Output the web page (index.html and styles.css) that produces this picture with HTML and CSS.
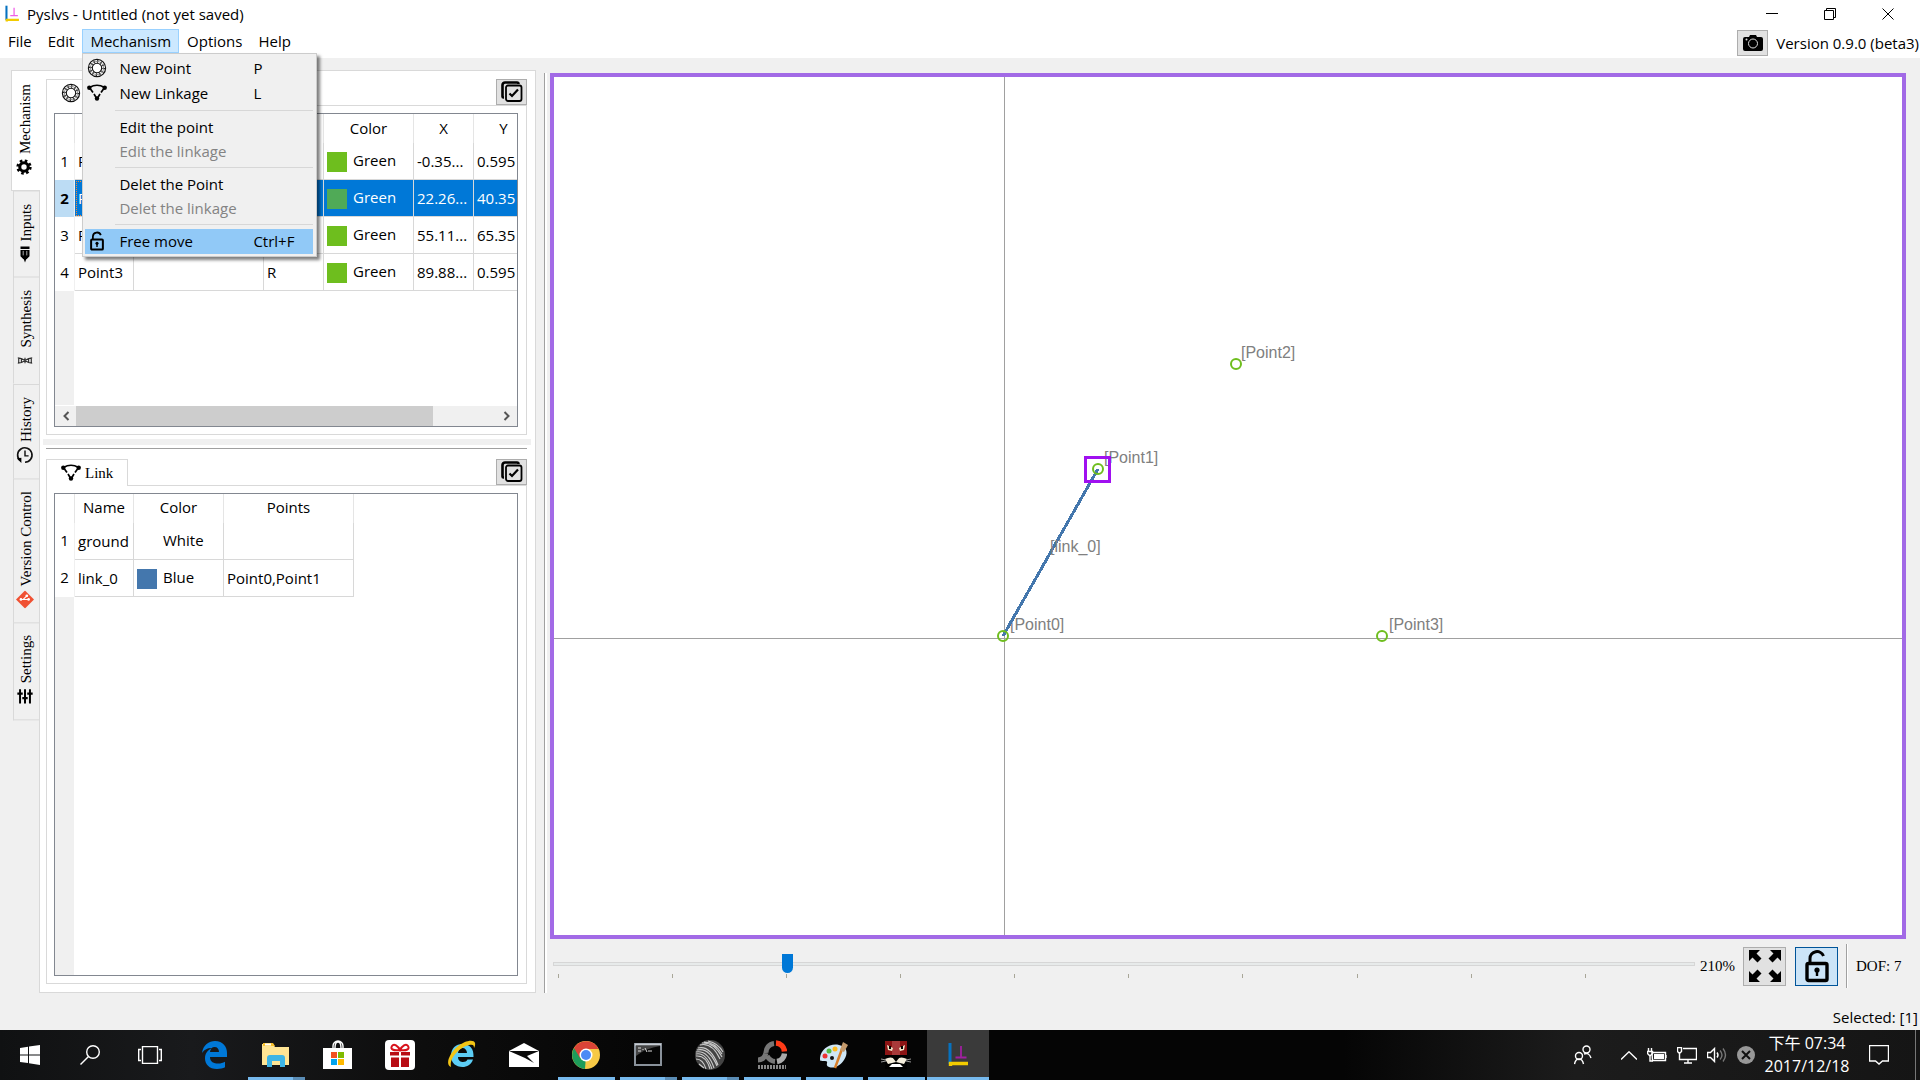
FILE: index.html
```html
<!DOCTYPE html>
<html lang="en">
<head>
<meta charset="utf-8">
<title>Pyslvs - Untitled (not yet saved)</title>
<link rel="stylesheet" href="styles.css">
</head>
<body>
<svg class="defs" aria-hidden="true">
  <symbol id="i-bearing" viewBox="0 0 20 20">
    <circle cx="10" cy="10" r="8.6" fill="#fff" stroke="#111" stroke-width="1.2"/>
    <circle cx="10" cy="10" r="6.6" fill="none" stroke="#222" stroke-width="2.8" stroke-dasharray="1.1 2.35"/>
    <circle cx="10" cy="10" r="6.6" fill="none" stroke="#777" stroke-width=".8"/>
    <circle cx="10" cy="10" r="4.7" fill="#fff" stroke="#111" stroke-width="1.1"/>
  </symbol>
  <symbol id="i-link" viewBox="0 0 20 20">
    <path d="M2.500 4.500Q10 0 17.500 4.500M3.500 6l2.500 3.500M7 11l3 5M16.500 6L14 9.500M13 11l-3 5" fill="none" stroke="#000" stroke-width="1.700"/>
    <circle cx="2.300" cy="4.700" r="2.200"/><circle cx="17.700" cy="4.700" r="2.200"/><circle cx="10" cy="15.500" r="2.200"/>
  </symbol>
  <symbol id="i-lock" viewBox="0 0 24 34">
    <path d="M5 14V9.500a7 7 0 0 1 13.500-2.500" fill="none" stroke="#000" stroke-width="3"/>
    <rect x="2" y="14.500" width="20" height="17" rx="1.500" fill="none" stroke="#000" stroke-width="3.400"/>
    <circle cx="12" cy="21" r="2.600"/><path d="M10.800 21h2.400v6h-2.400z"/>
  </symbol>
  <symbol id="i-multi" viewBox="0 0 22 22">
    <path d="M3 16.500H2.500a1 1 0 0 1-1-1V4a2.500 2.500 0 0 1 2.500-2.500h12a1.500 1.500 0 0 1 1.500 1.500" fill="none" stroke="#000" stroke-width="2.600"/>
    <rect x="5" y="4.500" width="15.500" height="15.500" rx="2" fill="#e1e1e1" stroke="#000" stroke-width="1.800"/>
    <path d="M8.500 12.500l2.500 2.500 6-6.500" fill="none" stroke="#000" stroke-width="2.200"/>
  </symbol>
  <symbol id="i-pyslvs" viewBox="0 0 22 26">
    <path d="M3 1v21" stroke="#0672c0" stroke-width="3" fill="none"/><path d="M3.500 24V21.500H21" stroke="#f2cb00" stroke-width="3.400" fill="none"/>
    <path d="M14 4v11M8.500 15.500h11" stroke="var(--mark)" stroke-width="1.800" fill="none"/>
  </symbol>
</svg>

<header class="titlebar">
  <svg class="app-icon"><use href="#i-pyslvs"/></svg>
  <h1 class="window-title">Pyslvs - Untitled (not yet saved)</h1>
  <div class="window-buttons">
    <button aria-label="Minimize"><svg width="12" height="12"><path d="M0 5.500h12" class="thin"/></svg></button>
    <button aria-label="Restore"><svg width="12" height="12"><path d="M.5 2.500h9v9h-9zM2.500 2V.5h9v9H10" class="thin"/></svg></button>
    <button aria-label="Close"><svg width="12" height="12"><path d="M.5.5l11 11M11.500.5l-11 11" class="thin"/></svg></button>
  </div>
</header>

<nav class="menubar">
  <button class="menu-title">File</button>
  <button class="menu-title">Edit</button>
  <div class="menu-open">
    <button class="menu-title active" aria-expanded="true">Mechanism</button>
    <div class="dropdown" role="menu">
      <button class="item tall" role="menuitem"><svg class="item-icon"><use href="#i-bearing"/></svg><span>New Point</span><kbd>P</kbd></button>
      <button class="item tall" role="menuitem"><svg class="item-icon"><use href="#i-link"/></svg><span>New Linkage</span><kbd>L</kbd></button>
      <hr>
      <button class="item" role="menuitem"><i></i><span>Edit the point</span></button>
      <button class="item" role="menuitem" disabled><i></i><span>Edit the linkage</span></button>
      <hr>
      <button class="item" role="menuitem"><i></i><span>Delet the Point</span></button>
      <button class="item" role="menuitem" disabled><i></i><span>Delet the linkage</span></button>
      <hr>
      <button class="item tall hover" role="menuitem"><svg class="item-icon"><use href="#i-lock"/></svg><span>Free move</span><kbd>Ctrl+F</kbd></button>
    </div>
  </div>
  <button class="menu-title">Options</button>
  <button class="menu-title">Help</button>
  <div class="menu-corner">
    <button class="tool" aria-label="Screenshot"><svg width="20" height="16" viewBox="0 0 20 16"><path d="M2 2h4l1-2h6l1 2h4a2 2 0 0 1 2 2v10a2 2 0 0 1-2 2H2a2 2 0 0 1-2-2V4a2 2 0 0 1 2-2z"/><circle cx="10" cy="8.500" r="4.500" fill="none" stroke="#ddd"/><circle cx="3.500" cy="4.500" r="1" fill="#ddd"/></svg></button>
    <span>Version 0.9.0 (beta3)</span>
  </div>
</nav>

<main class="workspace">
  <div class="side-tabs" role="tablist">
    <button class="side-tab selected" role="tab"><svg viewBox="0 0 20 20"><circle cx="10" cy="10" r="4.700" fill="none" stroke="#000" stroke-width="3.400"/><circle cx="10" cy="10" r="7" fill="none" stroke="#000" stroke-width="3" stroke-dasharray="2.800 2.700"/></svg>Mechanism</button>
    <button class="side-tab" role="tab"><svg viewBox="0 0 20 20"><path d="M5 1h10v3H5zM5 5h10v7l-3 3H8l-3-3z"/><path d="M8 6v5M12 6v5" stroke="#bbb"/><path d="M8.500 15h3L10 19z"/></svg>Inputs</button>
    <button class="side-tab" role="tab"><svg viewBox="0 0 20 20"><path d="M2 7q4 0 8 3t8 3M2 13q4 0 8-3t8-3M3 7v6M6 8v4M14 8v4M17 7v6M10 7v6" fill="none" stroke="#333" stroke-width="1.300"/></svg>Synthesis</button>
    <button class="side-tab" role="tab"><svg viewBox="0 0 20 20"><path d="M4.500 16A8 8 0 1 1 10 18" fill="none" stroke="#111" stroke-width="1.800"/><path d="M1 14l5-1v6z"/><path d="M10 5v6h4" fill="none" stroke="#111" stroke-width="1.600"/></svg>History</button>
    <button class="side-tab" role="tab"><svg viewBox="0 0 20 20"><path d="M10 0l10 10-10 10L0 10z" fill="#f05133"/><path d="M5 10h9M8 10l4-4" stroke="#fff" stroke-width="1.200"/><circle cx="5.500" cy="10" r="1.500" fill="#fff"/><circle cx="14" cy="10" r="1.500" fill="#fff"/><circle cx="12" cy="6" r="1.500" fill="#fff"/></svg>Version Control</button>
    <button class="side-tab" role="tab"><svg viewBox="0 0 20 20"><path d="M4.500 2v16M10 2v16M15.500 2v16" stroke="#000" stroke-width="2.200"/><path d="M1.500 7h6M7 12h6M12.500 7h6" stroke="#000" stroke-width="2.600"/></svg>Settings</button>
  </div>

  <section class="panel">
    <div class="group points">
      <div class="tab-row">
        <button class="tab" aria-label="Point"><svg><use href="#i-bearing"/></svg></button>
        <button class="tool" aria-label="Select all points"><svg width="22" height="22"><use href="#i-multi"/></svg></button>
      </div>
      <div class="pane">
        <div class="frame">
          <table class="grid grid-points">
            <colgroup><col class="c-num"><col class="c-name"><col class="c-wide"><col class="c-mid"><col class="c-color"><col class="c-mid"><col class="c-mid"></colgroup>
            <thead><tr><th></th><th></th><th></th><th></th><th>Color</th><th>X</th><th>Y</th></tr></thead>
            <tbody>
              <tr><th>1</th><td>Point0</td><td></td><td></td><td><i class="swatch green"></i>Green</td><td>-0.35...</td><td>0.595</td></tr>
              <tr class="selected"><th>2</th><td class="focus">Point1</td><td></td><td></td><td><i class="swatch green"></i>Green</td><td>22.26...</td><td>40.35</td></tr>
              <tr><th>3</th><td>Point2</td><td></td><td></td><td><i class="swatch green"></i>Green</td><td>55.11...</td><td>65.35</td></tr>
              <tr><th>4</th><td>Point3</td><td></td><td>R</td><td><i class="swatch green"></i>Green</td><td>89.88...</td><td>0.595</td></tr>
            </tbody>
          </table>
          <div class="row-rest"></div>
          <div class="scrollbar">
            <button aria-label="Scroll left"><svg width="8" height="10"><path d="M6.500 1l-4 4 4 4" class="arrow"/></svg></button>
            <div class="track"><div class="thumb"></div></div>
            <button aria-label="Scroll right"><svg width="8" height="10"><path d="M1.500 1l4 4-4 4" class="arrow"/></svg></button>
          </div>
        </div>
      </div>
    </div>
    <div class="h-split"></div>
    <div class="h-line"></div>
    <div class="group links">
      <div class="tab-row">
        <button class="tab"><svg><use href="#i-link"/></svg>Link</button>
        <button class="tool" aria-label="Select all links"><svg width="22" height="22"><use href="#i-multi"/></svg></button>
      </div>
      <div class="pane">
        <div class="frame">
          <table class="grid grid-links">
            <colgroup><col class="c-num"><col class="c-name"><col class="c-color"><col class="c-wide"></colgroup>
            <thead><tr><th></th><th>Name</th><th>Color</th><th>Points</th></tr></thead>
            <tbody>
              <tr><th>1</th><td>ground</td><td><i class="swatch white"></i>White</td><td></td></tr>
              <tr><th>2</th><td>link_0</td><td><i class="swatch blue"></i>Blue</td><td>Point0,Point1</td></tr>
            </tbody>
          </table>
          <div class="row-rest"></div>
        </div>
      </div>
    </div>
  </section>

  <div class="v-split"></div>

  <section class="view">
    <div class="canvas">
      <svg class="drawing" shape-rendering="crispEdges">
        <path d="M0 561.500h9999M450.500 0v9999" stroke="#a0a0a0"/>
        <g class="labels" shape-rendering="auto">
          <text x="456" y="553">[Point0]</text><text x="550" y="386">[Point1]</text><text x="687" y="281">[Point2]</text><text x="835" y="553">[Point3]</text>
        </g>
        <path d="M449 559L544 392" stroke="#4477ad" stroke-width="3"/>
        <text class="labels" x="496" y="475">[link_0]</text>
        <g fill="none" stroke="#6ebe1e" stroke-width="2" shape-rendering="auto">
          <circle cx="449" cy="559" r="5"/><circle cx="544" cy="392" r="5"/><circle cx="682" cy="287" r="5"/><circle cx="828" cy="559" r="5"/>
        </g>
        <rect x="531.500" y="380.500" width="24" height="24" fill="none" stroke="#a010f0" stroke-width="3"/>
      </svg>
    </div>
    <div class="controls">
      <div class="zoom">
        <input type="range" min="10" max="1000" value="210" aria-label="Zoom">
        <div class="ticks"><i></i><i></i><i></i><i></i><i></i><i></i><i></i><i></i><i></i><i></i></div>
      </div>
      <output class="percent">210%</output>
      <button class="big" aria-label="Zoom to fit"><svg width="34" height="34" viewBox="0 0 34 34"><path d="M1 1h11l-3.500 3.500 5 5-4 4-5-5L1 12zM33 1v11l-3.500-3.500-5 5-4-4 5-5L22 1zM1 33V22l3.500 3.500 5-5 4 4-5 5L12 33zM33 33H22l3.500-3.500-5-5 4-4 5 5L33 22z"/></svg></button>
      <button class="big on" aria-label="Free move" aria-pressed="true"><svg width="24" height="34"><use href="#i-lock"/></svg></button>
      <div class="sep"></div>
      <span class="dof">DOF: 7</span>
    </div>
  </section>
</main>
<div class="statusbar">Selected: [1]</div>

<footer class="taskbar">
  <button class="sys" aria-label="Start"><svg width="20" height="20" fill="#fff"><path d="M0 3l8-1.200V9.400H0zM9 1.600L20 0v9.400H9zM0 10.400h8V18l-8-1zM9 10.400h11V20L9 18.300z"/></svg></button>
  <button class="sys" aria-label="Search"><svg width="20" height="20"><circle cx="13" cy="7" r="6.300" class="line"/><path d="M8.500 11.500L.5 19.500" class="line"/></svg></button>
  <button class="sys" aria-label="Task View"><svg width="24" height="18"><path d="M4.500.5h15v17h-15zM3 3.500H.7v11H3M21 3.500h2.300v11H21" class="line"/></svg></button>
  <button class="app" aria-label="Edge"><svg width="26" height="28" viewBox="0 0 26 28"><path d="M1 12C2 4 8 0 14 0c8 0 12 6 12 12v4H9c0 5 4 6.500 8 6.500 3 0 5-.7 7-1.800v5.600C22 27.500 19 28 16 28 8 28 4 23 4 17.500 4 12 7 9 11 7 6 7 3 9 1 12zm8-1h9c0-3-1.600-5-4.400-5S9.400 8 9 11z" fill="#0078d7"/></svg></button>
  <button class="app running stacked" aria-label="File Explorer"><svg width="28" height="24"><path d="M0 1h11l2 3h14v18H0z" fill="#ffe594"/><path d="M1 0h10l2 3H1z" fill="#f8c12c"/><path d="M3 1.500h6" stroke="#fff" stroke-width="2"/><path d="M5 24V15q0-3 3-3h12q3 0 3 3v9h-5v-6h-8v6z" fill="#3eb5e5"/></svg></button>
  <button class="app" aria-label="Store"><svg width="30" height="30"><path d="M10 9V6a5 5 0 0 1 10 0v3M12 8q0-6 3-6t3 6" class="line"/><path d="M0 8h29v21H0z" fill="#fff"/><path d="M8 12h6v6H8z" fill="#f25022"/><path d="M15 12h6v6h-6z" fill="#7fba00"/><path d="M8 19h6v6H8z" fill="#00a4ef"/><path d="M15 19h6v6h-6z" fill="#ffb900"/></svg></button>
  <button class="app" aria-label="Gifts"><svg width="30" height="30"><rect width="30" height="30" rx="4" fill="#fff"/><path d="M5 12h20v4H5zM6 17h18v10H6z" fill="#b80c14"/><path d="M15 12v16M5 16.500h20" stroke="#fff" stroke-width="2"/><path d="M15 10C8 11 5 9 7 6s6 0 8 4c2-4 6-7 8-4s-1 5-8 4z" fill="none" stroke="#d8121b" stroke-width="2"/></svg></button>
  <button class="app" aria-label="Internet Explorer"><svg width="30" height="30"><path d="M4 16C4 8 9 4 15.500 4 23 4 27 9 26.500 17H11c0 4 3 5 5 5s3.500-.7 4.500-2.500h5.500C24 25 20 27 15.500 27 9 27 4 23 4 16zm7-3h9c0-3-2-5-4.500-5S11.400 10 11 13z" fill="#5ccdf5"/><path d="M4 27C-2 25 2 14 10 7S27-1 28 3c.5 2-.5 4-1 5 0-3-1-4-5-3C13 7 2 18 4 27z" fill="#f3c515"/></svg></button>
  <button class="app" aria-label="Mail"><svg width="30" height="24"><path d="M0 8L15 0l15 8v16H0z" fill="#fff"/><path d="M0 8h30L18 13l7 7-9-5z" fill="#0a0a0a"/></svg></button>
  <button class="app running" aria-label="Chrome"><svg width="28" height="28"><circle cx="14" cy="14" r="14" fill="#f7c945"/><path d="M14 14L2 7a14 14 0 0 0 11 21z" fill="#1d9c5a"/><path d="M2 7a14 14 0 0 1 24.500 1H14L8 17z" fill="#db4437"/><circle cx="14" cy="14" r="6.500" fill="#fff"/><circle cx="14" cy="14" r="5" fill="#4c8bf5"/></svg></button>
  <button class="app running stacked" aria-label="Command Prompt"><svg width="28" height="24"><rect x="1" y="1" width="26" height="21" fill="#050505" stroke="#8a929b" stroke-width="2"/><path d="M1 1.500h26" stroke="#c7ccd2" stroke-width="2"/><path d="M2 3h24q-14 2-24 10z" fill="#444"/><path d="M4 5h3M4 8h3M9 6v1M11 5l2 4M14 8h4" stroke="#ddd"/></svg></button>
  <button class="app running stacked" aria-label="Geometry"><svg width="30" height="30"><circle cx="15" cy="15" r="15" fill="#444"/><g fill="none" stroke="#ccc" stroke-width="1.100"><path d="M5 5q12-3 20 14M3 8q12-3 20 17M1 12q12-2 18 16M1 16q10-1 14 13M9 2q11 0 18 12M7 3q12-1 20 14M2 10q12-3 20 16M1 14q10-2 16 15M1 19q7 0 10 10M13 1q10 2 15 11M4 24l5 4"/></g></svg></button>
  <button class="app running" aria-label="PhotoScape"><svg width="30" height="30" fill="none"><path d="M1 20q6 0 8-7M9 13A9 9 0 0 1 17 3.500" stroke="#777" stroke-width="5"/><path d="M10 16q3 5 8 5.500" stroke="#777" stroke-width="5"/><path d="M19 3a9 9 0 0 1 8.500 8.500" stroke="#ff3b17" stroke-width="5.500"/><path d="M27.500 13.500a9 9 0 0 1-7.500 8" stroke="#aaa" stroke-width="5.500"/><path d="M1 27h28" stroke="#888" stroke-width="4" stroke-dasharray="2 1"/></svg></button>
  <button class="app running" aria-label="Paint"><svg width="30" height="28"><path d="M1 17C2 8 11 2 20 4s9 9 5 15-10 9-15 7 1-6-4-6-5 0-5-3z" fill="#cfe6f5"/><circle cx="6" cy="15" r="2.500" fill="#e33"/><circle cx="10" cy="10" r="2.500" fill="#5b4"/><circle cx="16" cy="8" r="2.500" fill="#fb2"/><circle cx="13" cy="17" r="2" fill="#111"/><path d="M16 27l7-19" stroke="#d77f2b" stroke-width="2.500"/><path d="M21 9l3-8 5 3-4 7z" fill="#c49a6c"/></svg></button>
  <button class="app running" aria-label="Tiger"><svg width="30" height="28"><path d="M4 0h22v28H4z" fill="#8c1414"/><path d="M11 0h8v16h-8z" fill="#a83a3a"/><path d="M6 4l6 3-1 3-4-1zM24 4l-6 3 1 3 4-1z" fill="#efe6c8"/><path d="M8 5h2v3H8zM20 5h2v3h-2zM4 14h22v14H4z" fill="#000"/><path d="M4 18q6-3 10 0h2q4-3 10 0l-3 5-8-2-8 2z" fill="#f5eedc"/><path d="M0 18l5 1M0 21l5-1M30 18l-5 1M30 21l-5-1" stroke="#999"/><path d="M8 26h14l-3-3h-8z" fill="#fff"/><path d="M12 17h6l-3 4z" fill="#000"/></svg></button>
  <button class="app running current" aria-label="Pyslvs"><svg width="22" height="26"><use href="#i-pyslvs"/></svg></button>
  <div class="tray">
    <svg width="18" height="20"><circle cx="12.500" cy="4.500" r="3.500" class="line"/><circle cx="5" cy="11" r="3.500" class="line"/><path d="M.5 19q1-5 4.500-5t4.500 5M10 9q5-2 7 4" class="line"/></svg>
    <svg width="16" height="9"><path d="M0 8.500L8 .8l8 7.700" class="line"/></svg>
    <svg width="20" height="14"><path d="M5 4.500h13.500v8h-13zM19 7v3" class="line"/><path d="M7 6h10v5H7z" fill="#fff"/><path d="M1.500 0v3M4.500 0v3M.5 3.500h5v2l-2 2h-1l-2-2zM3 7v6h3" class="line"/></svg>
    <svg width="20" height="17"><path d="M6 1.500h13.500v11H2.500V7M11 13v3M7 16h8M.5.5h4v4l-2 2-2-2z" class="line"/></svg>
    <svg width="20" height="16"><path d="M.5 5.500h3l4-4v13l-4-4h-3z" class="line"/><path d="M10 5.500q2 2.500 0 5" class="line"/><path d="M13 3.500q4 4.500 0 9M16 1.500q5 6.500 0 13" class="line dim"/></svg>
    <svg width="18" height="18"><circle cx="9" cy="9" r="9" fill="#989898"/><path d="M5 5l8 8M13 5l-8 8" stroke="#111" stroke-width="2"/></svg>
    <time class="clock" datetime="2017-12-18T19:34"><span>下午 07:34</span><span>2017/12/18</span></time>
    <svg width="20" height="20"><path d="M.5.5h19v15.500h-6L10 19l-3.500-3H.5z" class="line"/></svg>
    <div class="show-desktop"></div>
  </div>
</footer>
</body>
</html>
```
FILE: styles.css
```css
* { box-sizing: border-box; }
html, body { margin: 0; }
body {
  --mark: #f060e8;
  display: flex;
  flex-direction: column;
  height: 100vh;
  background: #f0f0f0;
  color: #000;
  font: 15px/20px "Open Sans", "Noto Sans", "Noto Sans CJK TC", sans-serif;
  overflow: hidden;
}
button { margin: 0; padding: 0; border: 0; background: none; color: inherit; font: inherit; }
svg { display: block; flex: none; }
.defs { position: absolute; width: 0; height: 0; }
.thin { fill: none; stroke: #000; }
.line { fill: none; stroke: #fff; stroke-width: 1.4; }
.dim { stroke: #777; }
.arrow { fill: none; stroke: #555; stroke-width: 2; }

.titlebar { display: flex; align-items: center; height: 29px; padding: 0 3px 1px 4px; background: #fff; }
.app-icon { width: 16px; height: 18px; }
.window-title { flex: 1; margin: 0 0 0 7px; font-size: 15px; font-weight: 400; }
.window-buttons { display: flex; }
.window-buttons button { display: flex; justify-content: center; align-items: center; width: 58px; height: 28px; }

.menubar { display: flex; height: 29px; background: #fff; }
.menu-title { height: 24px; padding: 0 7px; border: 1px solid transparent; white-space: nowrap; }
.menu-title.active { background: #cce8ff; border-color: #99d1ff; }
.menu-open { position: relative; }
.dropdown {
  position: absolute;
  z-index: 5;
  top: 24px;
  left: 0;
  width: 235px;
  padding: 2px;
  background: #f0f0f0;
  border: 1px solid #ccc;
  box-shadow: 3px 3px 3px rgba(0, 0, 0, .5);
}
.dropdown hr { height: 1px; margin: 4px 1px 4px 30px; border: 0; background: #d7d7d7; }
.item { display: grid; grid-template-columns: 24px 1fr 60px; column-gap: 10px; align-items: center; width: 228px; height: 24px; text-align: left; }
.item span { white-space: nowrap; }
.item.tall { height: 25px; padding-bottom: 2px; }
.item.hover { background: #91c9f7; }
.item:disabled { color: #838383; }
.item-icon { width: 20px; height: 20px; justify-self: center; }
.item kbd { font: inherit; }
.menu-corner { display: flex; align-items: center; gap: 8px; height: 28px; margin-left: auto; padding-right: 1px; white-space: nowrap; }
.tool { display: flex; align-items: center; justify-content: center; width: 31px; height: 26px; background: #e1e1e1; border: 1px solid #adadad; }

.workspace { flex: 1; min-height: 0; display: flex; padding: 12px 14px 13px 11px; }
.side-tabs { display: flex; flex-direction: column; align-items: flex-end; width: 28px; font: 15px/18px "Liberation Serif", serif; }
.side-tab {
  display: flex;
  align-items: center;
  gap: 4px;
  width: 26px;
  padding: 14px 0 12px 2px;
  writing-mode: vertical-rl;
  transform: rotate(180deg);
  border: 1px solid #d9d9d9;
  border-left: 0;
  border-top: 0;
}
.side-tab svg { width: 18px; height: 18px; transform: rotate(180deg); }
.side-tab:last-child { border-top: 1px solid #d9d9d9; }
.side-tab.selected { position: relative; z-index: 1; width: 29px; margin-right: -1px; padding: 14px 0 13px 3px; background: #fff; border-top: 1px solid #d9d9d9; }

.panel { flex: 0 0 497px; min-width: 0; display: flex; flex-direction: column; padding: 8px 8px 8px 6px; background: #fff; border: 1px solid #d9d9d9; }
.group { display: flex; flex-direction: column; min-height: 0; }
.points { flex: 356 1 0; }
.links { flex: 526 1 0; }
.tab-row { display: flex; justify-content: space-between; align-items: flex-start; height: 26px; }
.tab {
  position: relative;
  display: flex;
  align-items: center;
  gap: 4px;
  height: 27px;
  padding: 0 14px;
  background: #fff;
  border: 1px solid #d9d9d9;
  border-bottom: 0;
  font: 15px/20px "Liberation Serif", serif;
}
.tab svg { width: 20px; height: 20px; }
.points .tab { width: 88px; }
.pane { flex: 1; min-height: 0; min-width: 0; display: flex; padding: 7px 8px 7px 7px; border: 1px solid #d9d9d9; }
.frame { flex: 1; min-width: 0; display: flex; flex-direction: column; border: 1px solid #828790; overflow: hidden; }
.h-split { height: 6px; margin: 4px -4px 3px -3px; background: #f0f0f0; }
.h-line { height: 1px; margin-bottom: 10px; background: #a0a0a0; }

.grid { flex: none; table-layout: fixed; border-spacing: 0; }
.grid-points { width: 479px; }
.grid-links { width: 299px; }
.c-num { width: 20px; }
.c-name { width: 59px; }
.c-mid { width: 60px; }
.c-color { width: 90px; }
.c-wide { width: 130px; }
.grid th, .grid td { padding: 0; font-weight: 400; white-space: nowrap; overflow: hidden; border-right: 1px solid #d8d8d8; }
.grid thead th { height: 29px; padding-bottom: 2px; border-color: #e5e5e5; }
.grid tbody th { padding-bottom: 2px; border-color: #f0f0f0; }
.grid td { height: 37px; padding-left: 3px; border-bottom: 1px solid #d8d8d8; }
.grid .selected td { background: #0078d7; color: #fff; }
.grid .selected th { background: #bcdcf4; font-weight: 700; }
.grid .focus { outline: 1px dotted #ff8728; outline-offset: -2px; }
.swatch { display: inline-block; width: 20px; height: 20px; margin-right: 6px; vertical-align: middle; }
.green { background: #6ebe1e; }
.selected .green { background: #50aa57; }
.blue { background: #4477ad; }
.white { background: #fff; }
.row-rest { flex: 1; width: 19px; background: #f0f0f0; }
.scrollbar { display: flex; height: 21px; border-top: 1px solid #fff; background: #f0f0f0; }
.scrollbar button { display: flex; align-items: center; justify-content: center; width: 21px; }
.track { flex: 1; display: flex; }
.thumb { width: 85%; background: #cdcdcd; }

.v-split { width: 3px; margin: 3px 3px 0 8px; background: #fff; border-left: 1px solid #a0a0a0; }
.view { flex: 1; min-width: 0; display: flex; flex-direction: column; padding: 3px 0 5px; }
.canvas { flex: 1; min-height: 0; background: #fff; border: 4px solid #a26ae6; }
.drawing { width: 100%; height: 100%; }
.labels { fill: #808080; font: 16px "Liberation Sans", sans-serif; }
.controls { display: flex; align-items: center; height: 44px; margin-top: 5px; padding: 0 3px; font: 15px/20px "Liberation Serif", serif; }
.zoom { flex: 1; }
.zoom input { display: block; width: 100%; height: 19px; margin: 0; appearance: none; background: none; }
.zoom input::-webkit-slider-runnable-track { height: 4px; background: #e7eaea; border: 1px solid #d6d6d6; }
.zoom input::-webkit-slider-thumb { appearance: none; width: 11px; height: 19px; margin-top: -9px; background: #0078d7; border-radius: 0 0 6px 6px; }
.ticks { display: flex; justify-content: space-between; width: 90%; margin: 1px 0 0 5px; }
.ticks i { width: 1px; height: 4px; background: #a8a698; }
.percent { margin: 0 8px 0 5px; }
.big { display: flex; align-items: center; justify-content: center; width: 43px; height: 39px; margin-right: 9px; background: #e1e1e1; border: 1px solid #adadad; }
.big.on { background: #cce4f7; border-color: #005499; margin-right: 8px; }
.sep { width: 2px; height: 44px; margin-right: 8px; background: #fff; border-left: 1px solid #a0a0a0; }
.dof { min-width: 47px; }

.statusbar { height: 24px; padding-right: 2px; line-height: 22px; text-align: right; }

.taskbar {
  --mark: #a020a0;
  display: flex;
  height: 50px;
  background: linear-gradient(90deg, #101112, #191a1c 10%, #0d0d0d 22%, #050505 35%, #050505 70%, #1c1c1c 82%, #151515);
  color: #fff;
}
.taskbar button { display: flex; align-items: center; justify-content: center; }
.sys { width: 60px; }
.app { width: 62px; border-bottom: 3px solid transparent; padding-top: 3px; }
.sys:nth-child(3) { margin-right: 3px; }
.taskbar .running { border-image: linear-gradient(90deg, transparent 6px, #76b9ed 6px, #76b9ed 57px, transparent 57px) 3; border-width: 0 0 3px; border-style: solid; }
.taskbar .stacked { border-image-source: linear-gradient(90deg, transparent 6px, #76b9ed 6px, #76b9ed 46px, #5a8cb5 46px, #5a8cb5 57px, transparent 57px); }
.taskbar .current { background: #3a3a3a; border-image-source: linear-gradient(90deg, #76b9ed, #76b9ed); }
.tray { display: flex; align-items: center; gap: 10px; margin-left: auto; }
.tray svg:first-child { margin-right: 19px; }
.clock { display: flex; flex-direction: column; align-items: center; width: 84px; margin-right: 10px; font-size: 16px; line-height: 23px; white-space: nowrap; }
.show-desktop { width: 5px; height: 50px; margin-left: 16px; border-left: 1px solid #777; }
```
